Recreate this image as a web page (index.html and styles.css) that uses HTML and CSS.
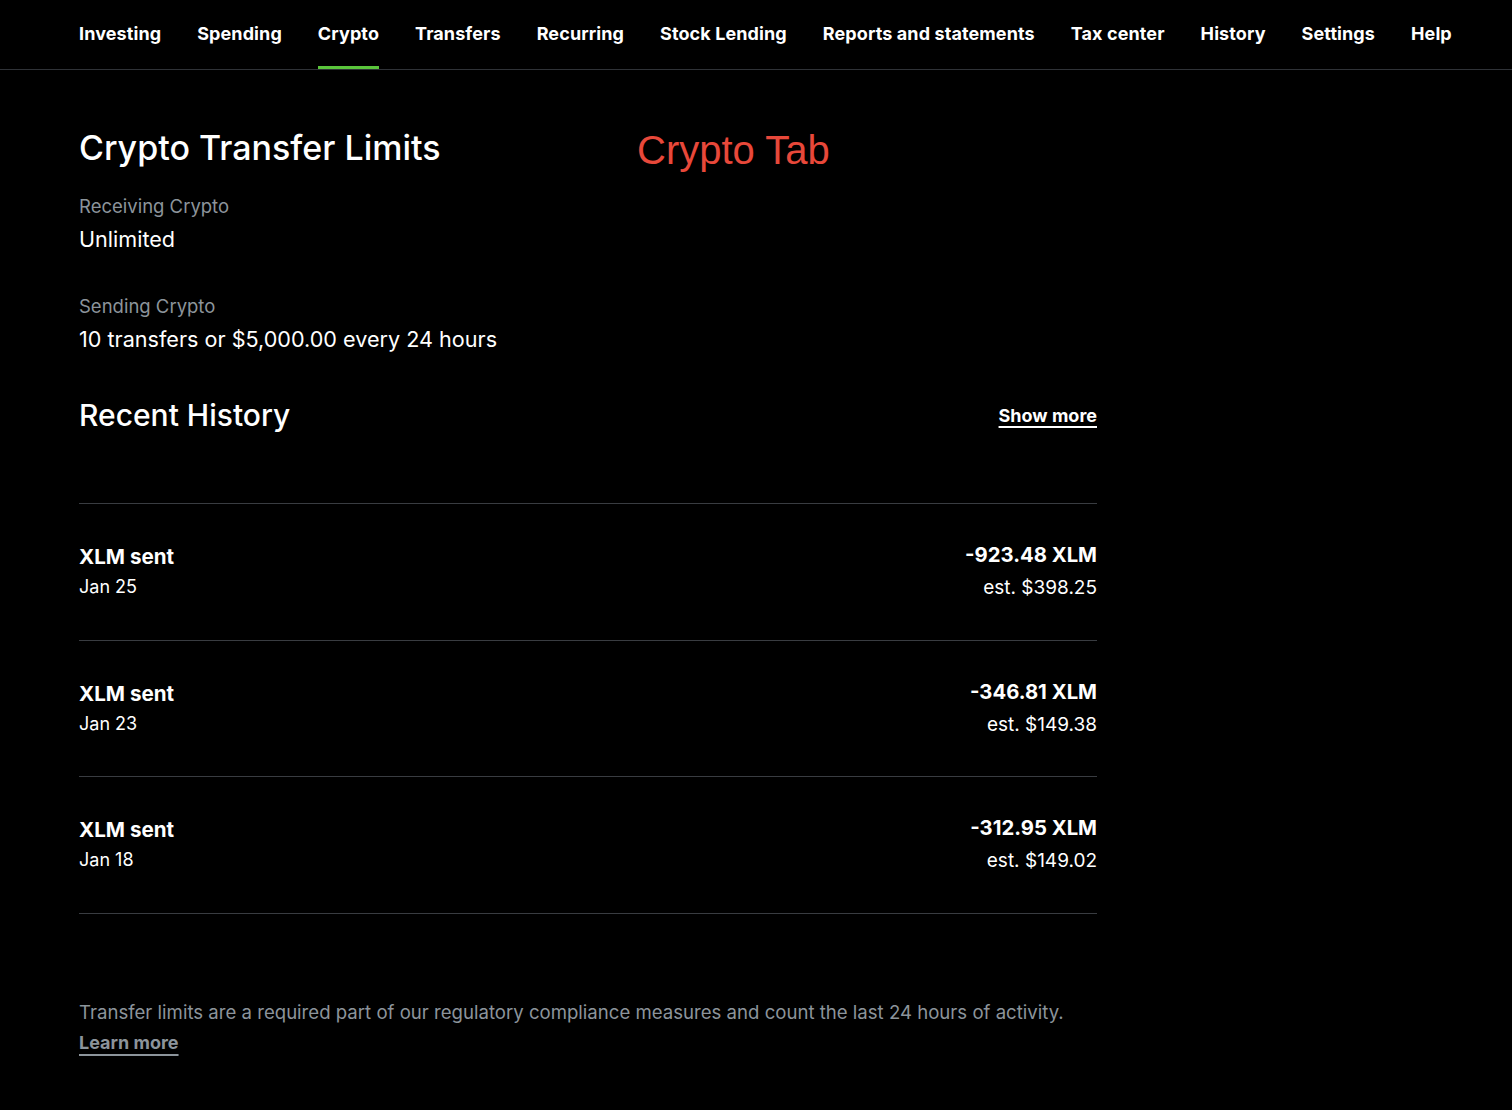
FILE: index.html
```html
<!DOCTYPE html>
<html>
<head>
<meta charset="utf-8">
<link rel="stylesheet" href="styles.css">
</head>
<body>
<nav class="nav">
  <a class="nav-item">Investing</a>
  <a class="nav-item">Spending</a>
  <a class="nav-item active">Crypto</a>
  <a class="nav-item">Transfers</a>
  <a class="nav-item">Recurring</a>
  <a class="nav-item">Stock Lending</a>
  <a class="nav-item">Reports and statements</a>
  <a class="nav-item">Tax center</a>
  <a class="nav-item">History</a>
  <a class="nav-item">Settings</a>
  <a class="nav-item">Help</a>
</nav>
<main class="main">
  <div class="title-row">
    <h1 class="title">Crypto Transfer Limits</h1>
    <div class="tab-label">Crypto Tab</div>
  </div>
  <div class="limit">
    <div class="limit-label">Receiving Crypto</div>
    <div class="limit-value">Unlimited</div>
  </div>
  <div class="limit">
    <div class="limit-label">Sending Crypto</div>
    <div class="limit-value">10 transfers or $5,000.00 every 24 hours</div>
  </div>
  <div class="history-head">
    <h2 class="history-title">Recent History</h2>
    <a class="show-more">Show more</a>
  </div>
  <div class="rows">
    <div class="row">
      <div class="row-left"><div class="row-name">XLM sent</div><div class="row-date">Jan 25</div></div>
      <div class="row-right"><div class="row-amount">-923.48 XLM</div><div class="row-est">est. $398.25</div></div>
    </div>
    <div class="row">
      <div class="row-left"><div class="row-name">XLM sent</div><div class="row-date">Jan 23</div></div>
      <div class="row-right"><div class="row-amount">-346.81 XLM</div><div class="row-est">est. $149.38</div></div>
    </div>
    <div class="row">
      <div class="row-left"><div class="row-name">XLM sent</div><div class="row-date">Jan 18</div></div>
      <div class="row-right"><div class="row-amount">-312.95 XLM</div><div class="row-est">est. $149.02</div></div>
    </div>
  </div>
  <p class="footnote">Transfer limits are a required part of our regulatory compliance measures and count the last 24 hours of activity.</p>
  <div class="learn-wrap"><a class="learn-more">Learn more</a></div>
</main>
</body>
</html>
```

FILE: styles.css
```css
html, body {
  margin: 0;
  padding: 0;
  background: #000;
  color: #fff;
  font-family: "Inter", "Noto Sans", sans-serif;
}
.nav {
  display: flex;
  gap: 36px;
  height: 69px;
  padding-left: 79px;
  border-bottom: 1px solid #2f3237;
  box-sizing: content-box;
}
.nav-item {
  font-size: 18px;
  font-weight: 700;
  letter-spacing: 0.1px;
  color: #fff;
  line-height: 68px;
  height: 66px;
  border-bottom: 3px solid transparent;
  white-space: nowrap;
}
.nav-item.active {
  border-bottom-color: #5ac53b;
}
.main {
  width: 1018px;
  padding: 58px 0 0 79px;
}
.title-row {
  display: flex;
  align-items: flex-start;
}
.title {
  margin: 0;
  width: 558px;
  font-size: 34px;
  font-weight: 500;
  line-height: 40px;
}
.tab-label {
  font-family: "Liberation Sans", Arial, sans-serif;
  font-size: 40px;
  color: #e8483a;
  line-height: 44px;
}
.limit {
  margin-top: 21px;
}
.limit + .limit {
  margin-top: 39px;
}
.limit-label {
  font-size: 18.5px;
  color: #8c949b;
  line-height: 26px;
}
.limit-value {
  font-size: 21.6px;
  line-height: 30px;
  margin-top: 5px;
}
.history-head {
  display: flex;
  justify-content: space-between;
  align-items: center;
  margin-top: 41px;
  height: 40px;
}
.history-title {
  margin: 0;
  font-size: 30px;
  font-weight: 500;
}
.show-more {
  font-size: 18px;
  font-weight: 700;
  text-decoration: underline;
  text-underline-offset: 4px;
  text-decoration-thickness: 2px;
}
.rows {
  margin-top: 68px;
  border-top: 1px solid #393c41;
}
.row {
  display: flex;
  justify-content: space-between;
  align-items: flex-start;
  height: 135.7px;
  border-bottom: 1px solid #393c41;
}
.row-left { padding-top: 38px; }
.row-right { padding-top: 37px; text-align: right; }
.row-name {
  font-size: 20.6px;
  font-weight: 700;
  line-height: 30px;
}
.row-date {
  font-size: 18px;
  line-height: 28px;
  margin-top: 1px;
}
.row-amount {
  font-size: 20.3px;
  font-weight: 700;
  line-height: 28px;
}
.row-est {
  font-size: 19px;
  line-height: 28px;
  margin-top: 5px;
}
.footnote {
  margin: 85px 0 0;
  font-size: 18.6px;
  color: #8c949b;
  line-height: 26px;
}
.learn-wrap {
  margin-top: 5px;
  line-height: 26px;
}
.learn-more {
  font-size: 18px;
  font-weight: 700;
  color: #8c949b;
  text-decoration-line: underline;
  text-decoration-color: #8c949b;
  text-decoration-thickness: 1.5px;
  text-underline-offset: 5px;
}
```
